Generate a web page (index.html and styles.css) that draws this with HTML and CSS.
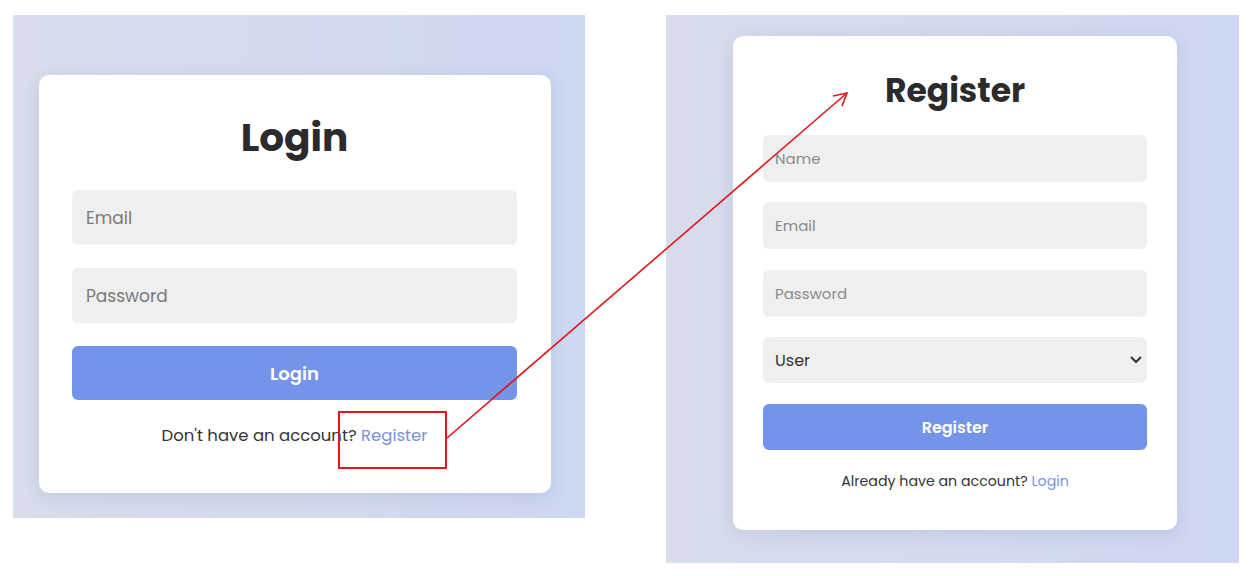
FILE: index.html
```html
<!DOCTYPE html>
<html lang="en">
<head>
<meta charset="utf-8">
<title>Login / Register</title>
<link rel="stylesheet" href="styles.css">
</head>
<body>
<div class="page">
  <section class="panel panel-login">
    <form class="card card-login">
      <h1 class="title title-login">Login</h1>
      <input class="field field-login" type="email" placeholder="Email">
      <input class="field field-login" type="password" placeholder="Password">
      <button class="btn btn-login" type="button">Login</button>
      <p class="switch switch-login">Don't have an account? <a href="#" class="link">Register</a></p>
    </form>
  </section>
  <section class="panel panel-register">
    <form class="card card-register">
      <h1 class="title title-register">Register</h1>
      <input class="field field-register" type="text" placeholder="Name">
      <input class="field field-register field-gap" type="email" placeholder="Email">
      <input class="field field-register" type="password" placeholder="Password">
      <div class="select-wrap">
        <select class="field field-register select">
          <option>User</option>
          <option>Admin</option>
        </select>
        <svg class="chevron" width="12" height="8" viewBox="0 0 12 8"><path d="M1.5 1.5 L6 6 L10.5 1.5" fill="none" stroke="#333" stroke-width="2" stroke-linecap="round" stroke-linejoin="round"/></svg>
      </div>
      <button class="btn btn-register" type="button">Register</button>
      <p class="switch switch-register">Already have an account? <a href="#" class="link">Login</a></p>
    </form>
  </section>
  <svg class="annotation" width="1250" height="576" viewBox="0 0 1250 576">
    <rect x="339" y="412" width="107" height="56" fill="none" stroke="#e3161b" stroke-width="2"/>
    <line x1="447" y1="438" x2="847" y2="93" stroke="#e3161b" stroke-width="1.6"/>
    <polyline points="833,96 847,93 842,106" fill="none" stroke="#e3161b" stroke-width="1.6" stroke-linejoin="miter"/>
  </svg>
</div>
</body>
</html>
```
FILE: styles.css
```css
* { box-sizing: border-box; }

html, body {
  margin: 0;
  padding: 0;
  background: #ffffff;
}

body {
  font-family: "Poppins", "Open Sans", "DejaVu Sans", sans-serif;
  color: #333333;
}

.page {
  position: relative;
  width: 1250px;
  height: 576px;
  display: flex;
  align-items: flex-start;
  gap: 81px;
  padding: 15px 0 0 13px;
}

.panel {
  background: linear-gradient(90deg, #d8dcec 0%, #d4daef 55%, #ccd7f3 100%);
  display: flex;
}

.panel-login {
  width: 572px;
  height: 503px;
  padding: 60px 34px 25px 26px;
}

.panel-register {
  width: 573px;
  height: 548px;
  padding: 21px 62px 33px 67px;
}

.card {
  flex: 1;
  background: #ffffff;
  border-radius: 10px;
  box-shadow: 0 4px 18px rgba(60, 70, 110, 0.12);
  display: flex;
  flex-direction: column;
}

.card-login {
  padding: 40px 34px 0 33px;
}

.card-register {
  padding: 34px 30px 0 30px;
}

.title {
  margin: 0;
  text-align: center;
  font-weight: 700;
  color: #2b2b2b;
}

.title-login {
  font-size: 39px;
  line-height: 46px;
  margin-bottom: 29px;
}

.title-register {
  font-size: 33px;
  line-height: 42px;
  margin-bottom: 23px;
}

.field {
  display: block;
  width: 100%;
  border: none;
  outline: none;
  background: #efefef;
  border-radius: 6px;
  font-family: inherit;
  color: #333333;
}

.field::placeholder {
  color: #7a7a7a;
}

.field-login {
  height: 55px;
  padding: 0 14px;
  font-size: 17px;
  margin-bottom: 23px;
}

.field-register {
  height: 47px;
  padding: 0 12px;
  font-size: 15px;
  margin-bottom: 20px;
}

.field-register.field-gap {
  margin-bottom: 21px;
}

.field-register::placeholder {
  color: #8a8a8a;
}

.select-wrap {
  position: relative;
  margin-bottom: 21px;
}

.select {
  appearance: none;
  -webkit-appearance: none;
  height: 46px;
  margin-bottom: 0;
  font-size: 16px;
  color: #333333;
  padding: 0 12px;
}

.chevron {
  position: absolute;
  right: 5px;
  top: 19px;
  pointer-events: none;
}

.btn {
  display: block;
  width: 100%;
  border: none;
  border-radius: 6px;
  background: #7494ea;
  color: #ffffff;
  font-family: inherit;
  font-weight: 600;
  cursor: pointer;
}

.btn-login {
  height: 54px;
  font-size: 18px;
}

.btn-register {
  height: 46px;
  font-size: 16px;
}

.switch {
  margin: 0;
  text-align: center;
  color: #333333;
}

.switch-login {
  margin-top: 24px;
  font-size: 16.5px;
  line-height: 24px;
}

.switch-register {
  margin-top: 21px;
  font-size: 14.2px;
  line-height: 20px;
}

.link {
  color: #7b91d9;
  text-decoration: none;
}

.annotation {
  position: absolute;
  left: 0;
  top: 0;
  pointer-events: none;
}
```
